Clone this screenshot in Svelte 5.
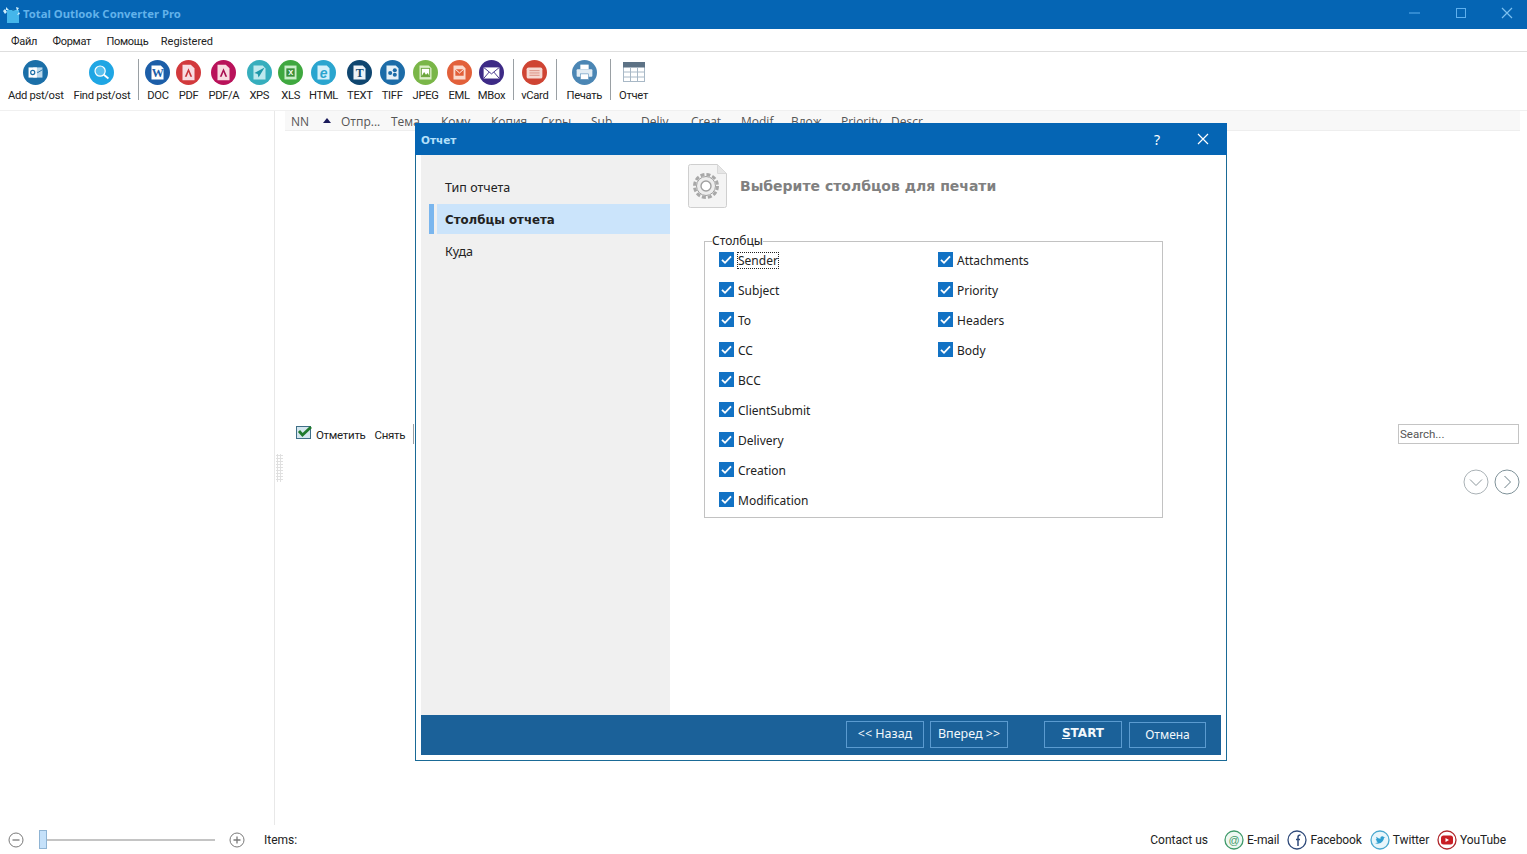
<script>
  const group1 = [
    { id: 'add', label: 'Add pst/ost', c: '#1b6fa8' },
    { id: 'find', label: 'Find pst/ost', c: '#1fa6e4' }
  ];
  const group2 = [
    { id: 'doc', label: 'DOC', c: '#1c5ea8' },
    { id: 'pdf', label: 'PDF', c: '#d2393c' },
    { id: 'pdfa', label: 'PDF/A', c: '#b9125a' },
    { id: 'xps', label: 'XPS', c: '#36aebd' },
    { id: 'xls', label: 'XLS', c: '#3fa83f' },
    { id: 'html', label: 'HTML', c: '#2aa5cf' },
    { id: 'text', label: 'TEXT', c: '#0f4670' },
    { id: 'tiff', label: 'TIFF', c: '#1c6ca8' },
    { id: 'jpeg', label: 'JPEG', c: '#7ab648' },
    { id: 'eml', label: 'EML', c: '#e2603a' },
    { id: 'mbox', label: 'MBox', c: '#3d2a86' }
  ];
  const headers = ['NN', 'Отпр...', 'Тема', 'Кому', 'Копия', 'Скры', 'Sub', 'Deliv', 'Creat', 'Modif', 'Влож', 'Priority', 'Descr'];
  const columns = [
    'Sender', 'Subject', 'To', 'CC', 'BCC', 'ClientSubmit', 'Delivery', 'Creation', 'Modification',
    'Attachments', 'Priority', 'Headers', 'Body'
  ];
</script>

{#snippet glyph(id)}
  {#if id === 'add'}
    <rect x="11" y="8" width="10" height="11" fill="#bcd9ec"/>
    <path d="M11 10.500l5 3 5-3" fill="none" stroke="#1b6fa8"/>
    <rect x="6" y="8" width="9" height="11" fill="#fff"/>
    <circle cx="10.500" cy="13.500" r="2.200" fill="none" stroke="#1b6fa8" stroke-width="1.300"/>
  {:else if id === 'find'}
    <circle cx="12" cy="12" r="5.500" fill="#58c0ee" stroke="#fff" stroke-width="1.300"/>
    <path d="M16 16l5 4" stroke="#fff" stroke-width="2"/>
  {:else if id === 'doc'}
    <path d="M7 6h10l3 3v12H7z" fill="#fff"/>
    <text x="13.500" y="18" class="gl" fill="#1c5ea8">W</text>
  {:else if id === 'pdf' || id === 'pdfa'}
    <path d="M7 5h9l4 4v13H7z" fill="#f8dde2"/>
    <path d="M13.500 9l4 9h-2l-2-5-2 5h-2z" fill={id === 'pdf' ? '#c8343a' : '#a81052'}/>
  {:else if id === 'xps'}
    <path d="M7 6h10l3 3v12H7z" fill="#bfe9ee"/>
    <path d="M19 8l-11 6 3.500 1 1 4z" fill="#1f97a8"/>
  {:else if id === 'xls'}
    <path d="M7 6h13v15H7z" fill="#c9eec9"/>
    <rect x="9" y="9" width="9" height="9" fill="#3a8f3a"/>
    <text x="13.500" y="16.500" class="gs" fill="#fff">X</text>
  {:else if id === 'html'}
    <path d="M7 6h10l3 3v12H7z" fill="#d3f0fa"/>
    <text x="13.500" y="19" class="ge" fill="#2aa5cf">e</text>
  {:else if id === 'text'}
    <path d="M7 6h10l3 3v12H7z" fill="#eef3f7"/>
    <text x="13.500" y="18" class="gl" fill="#0f4670">T</text>
  {:else if id === 'tiff'}
    <path d="M7 6h10l3 3v12H7z" fill="#e6f1f8"/>
    <circle cx="11" cy="14" r="2.200" fill="#1c6ca8"/><circle cx="16" cy="11" r="2.200" fill="#1c6ca8"/><circle cx="16" cy="16" r="2.200" fill="#1c6ca8"/>
  {:else if id === 'jpeg'}
    <path d="M7 6h10l3 3v12H7z" fill="#dcefc8"/>
    <rect x="9" y="9" width="9" height="9" fill="#fff" stroke="#6aa53a"/>
    <path d="M9 18l3-5 2 3 2-2 2 4z" fill="#6aa53a"/>
  {:else if id === 'eml'}
    <path d="M7 6h10l3 3v12H7z" fill="#fbd9cc"/>
    <rect x="9" y="10" width="9" height="7" fill="#e2603a"/><path d="M9 10l4.500 4 4.500-4" fill="none" stroke="#fff"/>
  {:else if id === 'mbox'}
    <rect x="5" y="8" width="17" height="12" fill="#fff"/>
    <path d="M5 8l8.500 7L22 8M5 20l6-7M22 20l-6-7" fill="none" stroke="#3d2a86" stroke-width="1"/>
  {/if}
{/snippet}

{#snippet tool(item)}
  <div class="tool">
    <svg class="ico" viewBox="0 0 27 27" width="25" height="25">
      <circle cx="13.500" cy="13.500" r="13.500" fill={item.c}/>
      {@render glyph(item.id)}
    </svg>
    <span>{item.label}</span>
  </div>
{/snippet}

<div class="app">
  <header class="titlebar">
    <svg class="logo" viewBox="0 0 18 18" width="18" height="18">
      <rect x="5" y="5" width="12" height="13" fill="#45b6ea"/>
      <path d="M1 6l2-2 2 3-2 2zM4 2l3 3H4zM14 2l3 1-2 3zM17 7l1 2-3 1z" fill="#cfeefa"/>
      <path d="M11 4l2 2h-3z" fill="#1f7fb5"/>
    </svg>
    <span class="apptitle">Total Outlook Converter Pro</span>
    <div class="winctl">
      <svg viewBox="0 0 46 20" width="46" height="20"><path d="M17 13h11" stroke="#5fb0ee"/></svg>
      <svg viewBox="0 0 46 20" width="46" height="20"><rect x="18.500" y="8.500" width="9" height="9" fill="none" stroke="#5fb0ee"/></svg>
      <svg viewBox="0 0 46 20" width="46" height="20"><path d="M18 8l10 10M28 8L18 18" stroke="#7cc0f0" stroke-width="1.200"/></svg>
    </div>
  </header>

  <nav class="menu">
    <span>Файл</span><span>Формат</span><span>Помощь</span><span class="reg">Registered</span>
  </nav>

  <div class="toolbar">
    {#each group1 as item}{@render tool(item)}{/each}
    <i class="sep"></i>
    {#each group2 as item}{@render tool(item)}{/each}
    <i class="sep"></i>
    <div class="tool">
      <svg class="ico" viewBox="0 0 27 27" width="25" height="25">
        <circle cx="13.500" cy="13.500" r="13.500" fill="#cf4433"/>
        <rect x="5" y="8" width="17" height="12" rx="2" fill="#f6d9d2"/>
        <path d="M8 11.500h11M8 14h11M8 16.500h11" stroke="#d98a7c"/>
      </svg>
      <span>vCard</span>
    </div>
    <i class="sep"></i>
    <div class="tool">
      <svg class="ico" viewBox="0 0 27 27" width="25" height="25">
        <circle cx="13.500" cy="13.500" r="13.500" fill="#4b86b4"/>
        <rect x="9" y="5" width="9" height="5" fill="#fff"/>
        <rect x="5" y="10" width="17" height="8" rx="1" fill="#e3edf4"/>
        <rect x="9" y="15" width="9" height="6" fill="#fff" stroke="#4b86b4" stroke-width=".6"/>
      </svg>
      <span>Печать</span>
    </div>
    <i class="sep"></i>
    <div class="tool">
      <svg class="ico" viewBox="0 0 25 25" width="25" height="25">
        <rect x="2.500" y="2.500" width="21" height="19" fill="#fff" stroke="#a8b8c6"/>
        <rect x="2" y="2" width="22" height="5.500" fill="#5d7285"/>
        <path d="M9.500 7v15M16.500 7v15M3 12h20M3 17h20" stroke="#a8b8c6"/>
      </svg>
      <span>Отчет</span>
    </div>
  </div>

  <main class="workspace">
    <aside class="tree"></aside>
    <div class="splitter"><i></i></div>
    <section class="listpane">
      <div class="listhead">
        {#each headers as h, i}
          <span class="hcell">{h}{#if i === 0}<b class="sort"></b>{/if}</span>
        {/each}
      </div>
      <div class="listbody"></div>
      <div class="pager">
        <svg class="markico" viewBox="0 0 17 15" width="17" height="15">
          <rect x=".5" y="1.500" width="14" height="12" fill="#d4e6ee" stroke="#3f6f87"/>
          <path d="M3 6l3.500 4L15 2" fill="none" stroke="#1f7a2d" stroke-width="2.800"/>
        </svg>
        <span class="mark">Отметить</span>
        <span class="unmark">Снять</span>
        <i class="pagesep"></i>
        <input class="search" placeholder="Search..." />
      </div>
      <div class="arrows">
        <svg viewBox="0 0 26 26" width="26" height="26"><circle cx="13" cy="13" r="12" fill="none" stroke="#aab2b6"/><path d="M7 10.500l6 6 6-6" fill="none" stroke="#8b969b"/></svg>
        <svg viewBox="0 0 26 26" width="26" height="26"><circle cx="13" cy="13" r="12" fill="none" stroke="#7f9299"/><path d="M10.500 7l6 6-6 6" fill="none" stroke="#6d8088"/></svg>
      </div>
    </section>
  </main>

  <footer class="status">
    <svg viewBox="0 0 16 16" width="16" height="16"><circle cx="8" cy="8" r="7" fill="none" stroke="#7a7a7a"/><path d="M4.500 8h7" stroke="#7a7a7a" stroke-width="1.300"/></svg>
    <div class="slider"><i class="thumb"></i></div>
    <svg viewBox="0 0 16 16" width="16" height="16"><circle cx="8" cy="8" r="7" fill="none" stroke="#7a7a7a"/><path d="M4.500 8h7M8 4.500v7" stroke="#7a7a7a" stroke-width="1.300"/></svg>
    <span class="items">Items:</span>
    <div class="links">
      <span class="contact">Contact us</span>
      <div class="link">
        <svg viewBox="0 0 20 20" width="20" height="20"><circle cx="10" cy="10" r="9" fill="#eef8f2" stroke="#3f9a6a" stroke-width="1.300"/><text x="10" y="14" class="gat" fill="#3f9a6a">@</text></svg>
        <span>E-mail</span>
      </div>
      <div class="link">
        <svg viewBox="0 0 20 20" width="20" height="20"><circle cx="10" cy="10" r="9" fill="#fff" stroke="#2f4a7a" stroke-width="1.300"/><path d="M11 16V9.500h2M9 9.500h2V7c0-1.500 1-2 2.500-2" fill="none" stroke="#2f4a7a" stroke-width="1.500"/></svg>
        <span>Facebook</span>
      </div>
      <div class="link">
        <svg viewBox="0 0 20 20" width="20" height="20"><circle cx="10" cy="10" r="9" fill="#e8f6fb" stroke="#4ba9cf" stroke-width="1.300"/><path d="M5 13c3 1.500 8 .5 9-5l1.500-1-1.500.2c-1-1.500-4-1-3.500 1.500-1.500 0-3-1-4-2-.5 1 0 2 .7 2.500L5.800 9c0 1 1 2 1.800 2.200H6.500c.3.700 1 1 1.700 1.100-.8.500-2 .8-3.200.700z" fill="#2f9fd0"/></svg>
        <span>Twitter</span>
      </div>
      <div class="link">
        <svg viewBox="0 0 20 20" width="20" height="20"><circle cx="10" cy="10" r="9" fill="#fff" stroke="#b0282c" stroke-width="1.300"/><rect x="4" y="5.500" width="12" height="9" rx="2.500" fill="#c81e24"/><path d="M8.500 8l3.500 2-3.500 2z" fill="#fff"/></svg>
        <span>YouTube</span>
      </div>
    </div>
  </footer>

  <div class="dialog">
    <div class="dtitle">
      <span class="dname">Отчет</span>
      <span class="help">?</span>
      <svg class="dclose" viewBox="0 0 12 12" width="12" height="12"><path d="M1 1l10 10M11 1L1 11" stroke="#fff" stroke-width="1.200"/></svg>
    </div>
    <div class="dbody">
      <div class="dmain">
        <aside class="steps">
          <div class="step">Тип отчета</div>
          <div class="step active">Столбцы отчета</div>
          <div class="step">Куда</div>
        </aside>
        <section class="page">
          <div class="pagehead">
            <svg viewBox="0 0 40 46" width="40" height="46">
              <path d="M2.500 1.500h27l9 9v32a2 2 0 0 1-2 2h-34a2 2 0 0 1-2-2v-39a2 2 0 0 1 2-2z" fill="#f4f4f4" stroke="#cfcfcf"/>
              <path d="M29.500 1.500v9h9" fill="#e6e6e6" stroke="#d8d8d8"/>
              <circle cx="18" cy="23" r="11.500" fill="none" stroke="#a8a8a8" stroke-width="3" stroke-dasharray="4 2.030"/>
              <circle cx="18" cy="23" r="9.500" fill="#ededed" stroke="#a0a0a0"/>
              <circle cx="18" cy="23" r="5" fill="#fff" stroke="#a0a0a0" stroke-width="1.400"/>
            </svg>
            <h2>Выберите столбцов для печати</h2>
          </div>
          <fieldset class="cols">
            <legend>Столбцы</legend>
            <div class="colgrid">
              {#each columns as c, i}
                <label class="chk">
                  <svg viewBox="0 0 15 15" width="15" height="15"><rect width="15" height="15" fill="#1272c4"/><path d="M3 7.800l3 3L12 4.300" fill="none" stroke="#fff" stroke-width="1.800"/></svg>
                  <span class:focus={i === 0}>{c}</span>
                </label>
              {/each}
            </div>
          </fieldset>
        </section>
      </div>
      <div class="dfoot">
        <button>&lt;&lt; Назад</button>
        <button>Вперед &gt;&gt;</button>
        <button class="start"><u>S</u>TART</button>
        <button class="cancel">Отмена</button>
      </div>
    </div>
  </div>
</div>

<style>
  :global(body) { margin: 0; background: #fff; }
  .app {
    position: relative;
    width: 1527px;
    height: 854px;
    overflow: hidden;
    display: flex;
    flex-direction: column;
    background: #fff;
    color: #222;
    font: 11.500px Roboto, "Open Sans", sans-serif;
  }
  .titlebar {
    height: 29px;
    flex: none;
    background: #0565b4;
    display: flex;
    align-items: center;
    padding-left: 2px;
    box-sizing: border-box;
  }
  .logo { margin-right: 3px; margin-top: -1px; }
  .apptitle {
    color: #62b2ea;
    font: bold 11.300px "Noto Sans", sans-serif;
    margin-top: -2px;
  }
  .winctl { margin-left: auto; display: flex; margin-right: -3px; }
  .winctl svg { display: block; margin-top: -10px; }
  .menu {
    height: 23px;
    flex: none;
    box-sizing: border-box;
    border-bottom: 1px solid #dedede;
    display: flex;
    align-items: center;
    padding: 2px 0 0 11px;
    gap: 15.500px;
    font-size: 11px;
    letter-spacing: -.3px;
  }
  .menu .reg { margin-left: -3px; letter-spacing: 0; }
  .toolbar {
    height: 59px;
    flex: none;
    box-sizing: border-box;
    border-bottom: 1px solid #f0f0f0;
    display: flex;
    align-items: flex-start;
    padding: 8px 0 0 8px;
    gap: 10px;
    font-size: 11.200px;
    letter-spacing: -.3px;
  }
  .tool { display: flex; flex-direction: column; align-items: center; }
  .tool:nth-child(8) { margin-left: 2px; }
  .tool:nth-child(9), .tool:nth-child(10), .tool:nth-child(11), .tool:nth-child(16) { margin-left: -1px; }
  .tool:nth-child(14) { margin-left: -2px; }
  .tool:nth-child(18) { margin-left: 1px; }
  .tool span { margin-top: 3px; line-height: 16px; white-space: nowrap; }
  .ico { display: block; margin: 0 -8px; }
  .sep { width: 1px; height: 41px; background: #9aa0a4; margin: -1px -2px 0 -2px; flex: none; }
  .workspace { flex: 1; display: flex; min-height: 0; }
  .tree { width: 274px; flex: none; border-right: 1px solid #e8e8e8; }
  .splitter { width: 10px; flex: none; display: flex; align-items: center; justify-content: flex-start; }
  .splitter i {
    width: 7px; height: 28px; margin-left: 1px;
    background-image: radial-gradient(#e0e0e0 1px, transparent 1.200px);
    background-size: 3px 3px;
  }
  .listpane { flex: 1; display: flex; flex-direction: column; min-width: 0; }
  .listhead {
    height: 17px;
    padding-top: 2px;
    margin-right: 7px;
    background: #f8f8f8;
    border-bottom: 1px solid #eee;
    display: flex;
    align-items: center;
    padding-left: 6px;
    color: #555;
    flex: none;
  }
  .hcell { width: 50px; flex: none; position: relative; font: 12px "Open Sans", sans-serif; white-space: nowrap; }
  .sort {
    position: absolute; left: 32px; top: 5px;
    border-left: 4px solid transparent; border-right: 4px solid transparent;
    border-bottom: 5px solid #1a1a5a;
  }
  .listbody { height: 293px; flex: none; }
  .pager { display: flex; align-items: center; height: 20px; padding-left: 11px; flex: none; padding-right: 8px; }
  .markico { margin-right: 3px; margin-top: -4px; }
  .mark, .unmark { letter-spacing: -.3px; margin-top: 2px; }
  .unmark { margin-left: 9px; }
  .pagesep { width: 1px; height: 20px; background: #9aa0a4; margin-left: 8px; }
  .search {
    margin-left: auto;
    width: 121px; height: 20px;
    box-sizing: border-box;
    border: 1px solid #c4c4c4;
    padding: 0 1px;
    font: 11.500px Roboto, sans-serif;
    outline: none;
    background: #fff;
  }
  .search::placeholder { color: #555; opacity: 1; }
  .arrows { display: flex; justify-content: flex-end; gap: 5px; margin-top: 25px; padding-right: 7px; }
  .status {
    height: 29px;
    flex: none;
    display: flex;
    align-items: center;
    padding-left: 8px;
    box-sizing: border-box;
    font-size: 12px;
  }
  .status > svg { display: block; }
  .slider {
    position: relative;
    width: 176px; height: 2px;
    background: #c4c4c4;
    margin: 0 14px 0 15px;
  }
  .thumb {
    position: absolute; left: 0; top: -9px;
    width: 8px; height: 19px;
    background: #c5e1fa;
    border: 1px solid #8fb4d4;
    box-sizing: border-box;
  }
  .items { margin-left: 19px; }
  .links { margin-left: auto; display: flex; align-items: center; gap: 8px; padding-right: 21px; }
  .contact { margin-right: 8px; }
  .link { display: flex; align-items: center; gap: 3px; letter-spacing: -.1px; }
  .link svg { display: block; }

  .dialog {
    position: absolute;
    left: 415px; top: 123px;
    width: 812px; height: 638px;
    box-sizing: border-box;
    border: 1px solid #1a6a96;
    background: #fff;
    display: flex;
    flex-direction: column;
    font: 12px "Noto Sans", sans-serif;
  }
  .dtitle {
    height: 32px;
    flex: none;
    margin: -1px -1px 0;
    background: #0565b4;
    display: flex;
    align-items: center;
    padding-left: 6px;
    color: #b4e0fa;
    box-sizing: border-box;
  }
  .dname { font: bold 10.500px "DejaVu Sans", sans-serif; margin-top: 1px; }
  .help { margin-left: auto; color: #fff; font-size: 14px; margin-right: 37px; }
  .dclose { margin-right: 18px; }
  .dbody { flex: 1; display: flex; flex-direction: column; padding: 0 5px 5px; min-height: 0; }
  .dmain { flex: 1; display: flex; min-height: 0; }
  .steps {
    width: 249px; flex: none;
    background: #f0f0f0;
    padding-top: 16px;
    box-sizing: border-box;
  }
  .step { height: 32px; line-height: 34px; padding-left: 16px; margin-left: 8px; box-sizing: border-box; font-size: 12.500px; }
  .step.active {
    height: 30px;
    margin: 1px 0 1px 8px;
    font: bold 11.800px/32px "DejaVu Sans", sans-serif;
    background: linear-gradient(to right, #7ab6ee 5px, #f0f0f0 5px, #f0f0f0 8px, #cbe4fb 8px);
  }
  .page { flex: 1; min-width: 0; padding: 8px 0 0 18px; }
  .pagehead { display: flex; align-items: center; gap: 12px; }
  .pagehead svg { display: block; }
  .pagehead h2 { margin: -1px 0 0; font: bold 14px "DejaVu Sans", sans-serif; color: #808080; }
  .cols {
    margin: 25px 0 0 16px;
    width: 459px;
    height: 284px;
    box-sizing: border-box;
    border: 1px solid #c2c2c2;
    padding: 0 0 0 14px;
  }
  .cols legend { padding: 0; margin-left: -7px; line-height: 14px; color: #222; font-size: 12px; }
  .colgrid {
    display: grid;
    grid-auto-flow: column;
    grid-template-rows: repeat(9, 30px);
    grid-template-columns: 219px 200px;
    padding-top: 2px;
  }
  .chk { display: flex; align-items: center; gap: 4px; height: 20px; }
  .chk svg { display: block; margin-top: -2px; }
  .chk span { border: 1px dotted transparent; line-height: 15px; margin-left: -1px; }
  .chk span.focus { border-color: #222; }
  .dfoot {
    height: 40px; flex: none;
    background: #1b6199;
    display: flex;
    align-items: center;
    padding-left: 425px;
    gap: 6px;
  }
  .dfoot button {
    width: 78px; height: 27px;
    box-sizing: border-box;
    background: #1b6199;
    border: 1px solid #5b9bd0;
    color: #f2f8fc;
    font: 12.500px "Noto Sans", sans-serif;
    padding: 0 0 2px;
    margin-top: -2px;
  }
  .dfoot .start { margin-left: 30px; font: bold 12px "DejaVu Sans", sans-serif; }
  .dfoot .cancel { margin-left: 1px; margin-top: 0; width: 77px; height: 26px; font-size: 12px; }

  :global(.gl) { font: bold 13px "Liberation Serif", serif; text-anchor: middle; }
  :global(.gs) { font: bold 8px "Liberation Sans", sans-serif; text-anchor: middle; }
  :global(.ge) { font: italic bold 15px "Liberation Sans", sans-serif; text-anchor: middle; }
  :global(.gat) { font: 11px "Liberation Sans", sans-serif; text-anchor: middle; }
</style>
